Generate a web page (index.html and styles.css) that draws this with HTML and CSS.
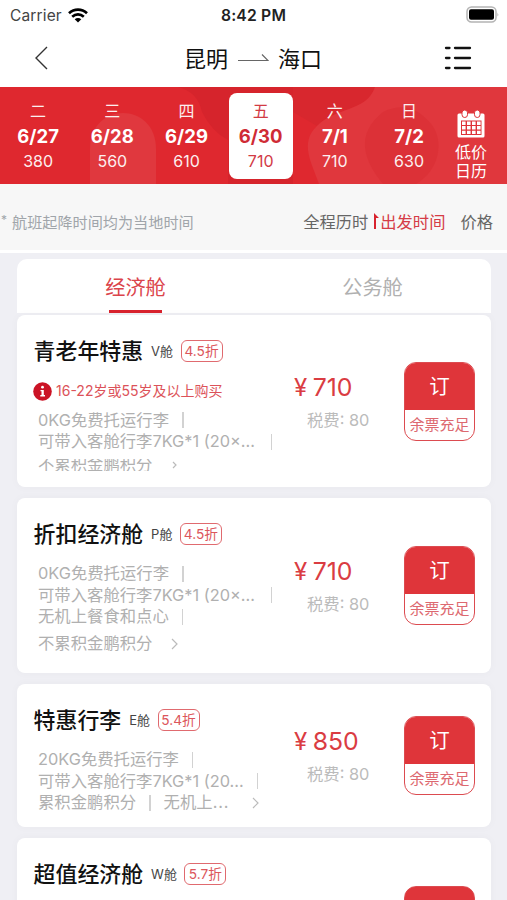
FILE: index.html
```html
<!DOCTYPE html>
<html lang="zh-CN">
<head>
<meta charset="utf-8">
<meta name="viewport" content="width=device-width, initial-scale=1">
<title>昆明 - 海口</title>
<link rel="stylesheet" href="styles.css">
</head>
<body>
<div class="status">
  <div class="carrier"><span>Carrier</span>
    <svg class="wifi" width="20" height="15" viewBox="0 0 20 15" fill="none" stroke="#000" stroke-width="2.7"><path d="M1 5.2C6.200 .4 13.800 .4 19 5.200M4.200 8.700c3.400-3 8.200-3 11.600 0"/><path d="M10 14.400 6.700 11.200c1.900-1.700 4.700-1.700 6.600 0z" fill="#000" stroke="none"/></svg>
  </div>
  <div class="clock">8:42 PM</div>
  <svg class="battery" width="33" height="17" viewBox="0 0 33 17"><rect x="1" y="1" width="29" height="15" rx="4.500" fill="#fff" stroke="#b4b4b4" stroke-width="1.500"/><rect x="3" y="3.300" width="25" height="10.400" rx="2" fill="#000"/><path d="M31.500 6.500q1.500 2 0 4z" fill="#aaa"/></svg>
</div>
<header class="nav">
  <svg width="14" height="24" viewBox="0 0 14 24" fill="none" stroke="#333" stroke-width="1.400"><path d="M13 1 2 12l11 11"/></svg>
  <div class="route"><span>昆明</span>
    <svg width="32" height="10" viewBox="0 0 32 10" fill="none" stroke="#666" stroke-width="1.200"><path d="M1 7.500h30L25 1.500"/></svg>
    <span>海口</span></div>
  <svg width="28" height="24" viewBox="0 0 28 24" stroke="#111" stroke-width="2.300" stroke-linecap="round"><path d="M2 2h3.500M11 2h15M2 12h3.500M11 12h15M2 22h3.500M11 22h15"/></svg>
</header>
<section class="dates">
  <svg class="pattern" width="507" height="97" viewBox="0 0 507 97"><path d="M178 0q20 5 24 25 10 20 26 28v44h65V0z" fill="#d6242c"/><path d="M293 0h82c-8 25-40 20-58 39l-24-14z" fill="#d8272e"/><path d="M90 97V62c0-48 66-48 66 0v35z" fill="#e0383e"/><path d="M375 0c-8 25-40 20-58 39-18 17-5 37 2 58h188V0z" fill="#e0373d"/><path d="M383 25c-28 22-20 48 0 72h33c24-14 28-43 16-59-15-18-30-22-49-13z" fill="#dc3137"/></svg>
  <div class="day"><span>二</span><b>6/27</b><i>380</i></div>
  <div class="day"><span>三</span><b>6/28</b><i>560</i></div>
  <div class="day"><span>四</span><b>6/29</b><i>610</i></div>
  <div class="day active"><span>五</span><b>6/30</b><i>710</i></div>
  <div class="day"><span>六</span><b>7/1</b><i>710</i></div>
  <div class="day"><span>日</span><b>7/2</b><i>630</i></div>
  <div class="calendar">
    <svg width="28" height="28" viewBox="0 0 28 28"><rect x=".5" y="3.500" width="27" height="24" rx="1.500" fill="#fff"/><path d="M4 10.500h20.500v14.500H4z" fill="#de3339"/><path d="M5 11.500h3.600v3.400H5zm5 0h3.600v3.400H10zm5 0h3.600v3.400H15zm5 0h3.600v3.400H20zM5 16.100h3.600v3.400H5zm5 0h3.600v3.400H10zm5 0h3.600v3.400H15zm5 0h3.600v3.400H20zM5 20.700h3.600v3.400H5zm5 0h3.600v3.400H10zm5 0h3.600v3.400H15zm5 0h3.600v3.400H20z" fill="#fff"/><g fill="#fff" stroke="#de3339"><rect x="5" y="0" width="5.500" height="7.500" rx="2.750"/><rect x="17.500" y="0" width="5.500" height="7.500" rx="2.750"/></g></svg>
    <span>低价</span><span>日历</span>
  </div>
</section>
<section class="filter">
  <span class="note"><em>*</em>航班起降时间均为当地时间</span>
  <span class="sort">全程历时</span>
  <span class="sort on"><svg width="6" height="16" viewBox="0 0 6 16"><path d="M0 16V0l5 5H2v11z" fill="#d8232e"/></svg>出发时间</span>
  <span class="sort last">价格</span>
</section>
<main>
  <div class="tabs"><div class="tab on">经济舱</div><div class="tab">公务舱</div></div>

  <article class="card c1">
    <div class="info">
      <div class="title"><h2>青老年特惠</h2><span>V舱</span><strong>4.5折</strong></div>
      <div class="alert"><svg width="19" height="19" viewBox="0 0 19 19"><circle cx="9.500" cy="9.500" r="9.300" fill="#cb1325"/><circle cx="9.500" cy="5.200" r="1.400" fill="#fff"/><path d="M7.500 8h3.300v5H12v1.500H7.300V13h1.200V9.300h-1z" fill="#fff"/></svg>16-22岁或55岁及以上购买</div>
      <div class="line"><span>0KG免费托运行李</span><u></u></div>
      <div class="line"><span>可带入客舱行李7KG*1 (20×...</span><u class="far"></u></div>
      <div class="clip"><div class="line"><span>不累积金鹏积分</span><svg class="more small" width="5" height="8" viewBox="0 0 5 8"><path d="m1 1 3 3-3 3"/></svg></div></div>
    </div>
    <div class="price"><p>¥<span>710</span></p><small>税费: 80</small></div>
    <div class="book"><b>订</b><span>余票充足</span></div>
  </article>

  <article class="card c2">
    <div class="info">
      <div class="title"><h2>折扣经济舱</h2><span>P舱</span><strong>4.5折</strong></div>
      <div class="line"><span>0KG免费托运行李</span><u></u></div>
      <div class="line"><span>可带入客舱行李7KG*1 (20×...</span><u class="far"></u></div>
      <div class="line"><span>无机上餐食和点心</span><u></u></div>
      <div class="line final"><span>不累积金鹏积分</span><svg class="more" width="7" height="12" viewBox="0 0 7 12"><path d="m1 1 5 5-5 5"/></svg></div>
    </div>
    <div class="price"><p>¥<span>710</span></p><small>税费: 80</small></div>
    <div class="book"><b>订</b><span>余票充足</span></div>
  </article>

  <article class="card c3">
    <div class="info">
      <div class="title"><h2>特惠行李</h2><span>E舱</span><strong>5.4折</strong></div>
      <div class="line"><span>20KG免费托运行李</span><u></u></div>
      <div class="line"><span>可带入客舱行李7KG*1 (20...</span><u></u></div>
      <div class="line"><span>累积金鹏积分</span><u></u><span class="next">无机上<em>...</em></span><svg class="more wide" width="7" height="12" viewBox="0 0 7 12"><path d="m1 1 5 5-5 5"/></svg></div>
    </div>
    <div class="price"><p>¥<span>850</span></p><small>税费: 80</small></div>
    <div class="book"><b>订</b><span>余票充足</span></div>
  </article>

  <article class="card c2 last-card">
    <div class="info">
      <div class="title"><h2>超值经济舱</h2><span>W舱</span><strong>5.7折</strong></div>
    </div>
    <div class="book"></div>
  </article>
</main>
</body>
</html>
```
FILE: styles.css
```css
* { box-sizing: border-box; margin: 0; padding: 0; }
html { overflow: hidden; }
body {
  width: 507px; height: 900px; overflow: hidden; background: #efeff4;
  font-family: Inter, "Noto Sans CJK SC", sans-serif; color: #111; white-space: nowrap;
  display: flex; flex-direction: column;
}
svg { display: block; flex: none; }
i, em { font-style: normal; }

.status {
  height: 30px; flex: none; padding: 0 8px 0 10px; background: #fff;
  display: grid; grid-template-columns: 1fr auto 1fr; align-items: center;
}
.carrier { display: flex; align-items: center; gap: 6px; font-size: 15.500px; letter-spacing: .15px; color: #444; }
.clock { font-size: 15.700px; font-weight: 600; color: #222; letter-spacing: .2px; margin-left: -2px; }
.battery { justify-self: end; margin-top: -2px; }

.nav { height: 57px; flex: none; background: #fff; display: flex; align-items: center; justify-content: space-between; padding: 0 35px 2px 34px; }
.route { display: flex; align-items: center; gap: 9px; font-size: 22px; padding-left: 14px; margin-top: -2px; }
.route svg { margin-top: 2px; }

.dates { height: 97px; flex: none; position: relative; background: #df282f; display: flex; padding: 6px 0 5px 1px; color: #fff; }
.pattern { position: absolute; left: 0; top: 0; }
.day { position: relative; width: 64px; margin: 0 5.100px; border-radius: 8px; text-align: center; display: flex; flex-direction: column; padding-top: 6px; }
.day span { font-size: 16px; line-height: 25px; opacity: .92; }
.day b { font-size: 18.500px; line-height: 25px; font-weight: 700; }
.day i { font-size: 16px; line-height: 25px; opacity: .92; }
.day.active { background: #fff; color: #cf2b35; }
.calendar { position: relative; flex: 1; display: flex; flex-direction: column; align-items: center; padding: 17px 11px 0 0; font-size: 16px; line-height: 19px; }
.calendar svg { margin-bottom: 5px; }

.filter { height: 69px; flex: none; background: #f7f7f7; border-bottom: 3px solid #fff; display: flex; align-items: center; padding: 8px 14px 0 1px; }
.note { font-size: 15.150px; color: #a0a5aa; flex: 1; display: flex; }
.note em { width: 11px; font-size: 12px; line-height: 20px; }
.sort { font-size: 16.300px; color: #666; }
.sort.on { color: #d53c46; display: flex; align-items: center; margin: 0 15px 0 6px; }

main { flex: 1; min-height: 0; padding: 6px 16px 0 17px; display: flex; flex-direction: column; overflow: hidden; }
.tabs { height: 54px; flex: none; background: #fff; border-radius: 10px 10px 0 0; display: grid; grid-template-columns: 1fr 1fr; }
.tab { font-size: 20.200px; line-height: 57px; color: #b0b0b0; display: flex; flex-direction: column; align-items: center; height: 54px; }
.tab.on { color: #db444b; }
.tab.on::after { content: ""; width: 53px; height: 3px; margin-top: -6px; background: #d9232e; }

.card { flex: none; background: #fff; border-radius: 8px; display: flex; align-items: center; margin-bottom: 11px; padding: 0 16px 0 17px; box-shadow: 0 0 10px rgba(0, 0, 0, .03); }
.c1 { height: 172px; margin-top: 2px; }
.c2 { height: 175px; }
.c3 { height: 143px; }
.info { width: 260px; align-self: stretch; padding-top: 22px; }
.title { height: 28px; margin: 0 0 15px -.4px; display: flex; align-items: center; }
.title h2 { font-size: 21.900px; font-weight: 500; line-height: 28px; }
.title span { font-size: 13px; margin: 0 7.500px 0 8px; color: #444; line-height: 28px; height: 28px; }
.title strong { width: 42px; height: 22px; border: 1.500px solid #e06a6f; border-radius: 6px; color: #dc565c; font-size: 13.700px; font-weight: 400; line-height: 20px; text-align: center; }
.alert { display: flex; align-items: center; gap: 4px; height: 22px; margin: 0 0 7px -1px; font-size: 14px; line-height: 20px; color: #dc5259; }
.c1 .title { margin-bottom: 15px; }
.c1 .alert { margin-bottom: 7.500px; }
.line { height: 21.600px; padding-left: 4px; display: flex; align-items: center; font-size: 16.350px; line-height: 21.600px; color: #b0b0b0; }
.line u { width: 1.500px; height: 16px; margin-left: 13px; background: #d2d2d2; }
.line u.far { margin-left: 16px; }
.next { margin-left: 13px; }
.next em { letter-spacing: .8px; }
.more { margin-left: 19px; fill: none; stroke: #bbb; stroke-width: 1.200; }
.more.small { margin-left: 20px; }
.more.wide { margin-left: 23px; }
.final { margin-top: 5px; }
.clip { height: 12px; margin-top: 6px; overflow: hidden; display: flex; align-items: center; }

.price { width: 110px; color: #da3c42; }
.price p { font-size: 24px; line-height: 34px; padding-top: 3px; margin-bottom: -1px; }
.price p span { margin-left: 5.500px; font-size: 24.800px; }
.price small { display: block; font-size: 16.350px; line-height: 32px; padding-left: 13px; color: #bbb; }
.book { width: 71px; height: 79px; border: 1.500px solid #dc4b50; border-radius: 12px; overflow: hidden; text-align: center; flex: none; }
.book b { display: block; height: 47px; background: #df353a; color: #fff; font-size: 20.500px; font-weight: 400; line-height: 47px; }
.book span { display: block; font-size: 15px; line-height: 30px; color: #dd6970; }
.last-card .book { margin-left: 110px; background: linear-gradient(#df353a 47px, #fff 47px); }
```
